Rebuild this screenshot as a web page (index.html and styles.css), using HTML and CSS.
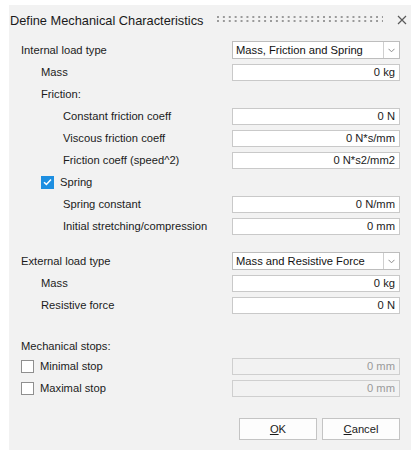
FILE: index.html
```html
<!DOCTYPE html>
<html>
<head>
<meta charset="utf-8">
<link rel="stylesheet" href="styles.css">
</head>
<body>
<div class="dialog">
  <div class="titlebar">
    <span class="title">Define Mechanical Characteristics</span>
    <span class="grip"></span>
    <svg class="close" width="10" height="10" viewBox="0 0 10 10"><path d="M1 1L9 9M9 1L1 9" stroke="#5a5a5a" stroke-width="1.2" fill="none"/></svg>
  </div>
  <div class="body">
    <div class="row"><span class="label l0">Internal load type</span>
      <div class="combo"><span class="combo-text">Mass, Friction and Spring</span><span class="combo-btn"><svg width="7" height="5" viewBox="0 0 7 5"><path d="M0.5 0.8L3.5 3.8L6.5 0.8" stroke="#8a8a8a" stroke-width="1" fill="none"/></svg></span></div>
    </div>
    <div class="row"><span class="label l1">Mass</span><div class="field">0 kg</div></div>
    <div class="row"><span class="label l1">Friction:</span></div>
    <div class="row"><span class="label l2">Constant friction coeff</span><div class="field">0 N</div></div>
    <div class="row"><span class="label l2">Viscous friction coeff</span><div class="field">0 N*s/mm</div></div>
    <div class="row"><span class="label l2">Friction coeff (speed^2)</span><div class="field">0 N*s2/mm2</div></div>
    <div class="row"><span class="label l1 check-label"><span class="check on"><svg width="9" height="8" viewBox="0 0 9 8"><path d="M1 4.2L3.4 6.4L8 1.4" stroke="#fff" stroke-width="1.5" fill="none"/></svg></span>Spring</span></div>
    <div class="row"><span class="label l2">Spring constant</span><div class="field">0 N/mm</div></div>
    <div class="row"><span class="label l2">Initial stretching/compression</span><div class="field">0 mm</div></div>

    <div class="row section"><span class="label l0">External load type</span>
      <div class="combo"><span class="combo-text">Mass and Resistive Force</span><span class="combo-btn"><svg width="7" height="5" viewBox="0 0 7 5"><path d="M0.5 0.8L3.5 3.8L6.5 0.8" stroke="#8a8a8a" stroke-width="1" fill="none"/></svg></span></div>
    </div>
    <div class="row"><span class="label l1">Mass</span><div class="field">0 kg</div></div>
    <div class="row"><span class="label l1">Resistive force</span><div class="field">0 N</div></div>

    <div class="row small stops"><span class="label l0">Mechanical stops:</span></div>
    <div class="row"><span class="label l0 check-label"><span class="check"></span>Minimal stop</span><div class="field disabled">0 mm</div></div>
    <div class="row"><span class="label l0 check-label"><span class="check"></span>Maximal stop</span><div class="field disabled">0 mm</div></div>

    <div class="buttons">
      <button class="btn"><u>O</u>K</button>
      <button class="btn"><u>C</u>ancel</button>
    </div>
  </div>
</div>
</body>
</html>
```
FILE: styles.css
```css
html, body {
  margin: 0;
  padding: 0;
  background: #ffffff;
}
body {
  font-family: "Liberation Sans", Arial, sans-serif;
  font-size: 11.2px;
  color: #1b1b1b;
}
.dialog {
  margin: 5px 7px 0 9px;
  width: 402px;
  height: 445px;
  background: #f2f2f2;
  box-sizing: border-box;
  padding: 0 11px 0 0;
}
.titlebar {
  height: 28px;
  display: flex;
  align-items: center;
  padding-left: 1px;
  padding-top: 2px;
  box-sizing: border-box;
}
.title {
  font-size: 12.8px;
  color: #1a1a1a;
}
.grip {
  flex: 1;
  height: 8px;
  margin: 0 14px 0 14px;
  background-image: radial-gradient(circle at 1px 1px, #9a9a9a 0.8px, transparent 1.1px);
  background-size: 5.9px 4px;
}
.close {
  margin-right: -7px;
}
.body {
  padding-top: 6px;
}
.row {
  height: 22px;
  display: flex;
  align-items: center;
}
.row.section {
  margin-top: 13px;
}
.row.stops {
  margin-top: 21px;
  height: 18px;
}
.label {
  flex: 1;
  white-space: nowrap;
  display: flex;
  align-items: center;
}
.l0 { padding-left: 12px; }
.l1 { padding-left: 32px; }
.l2 { padding-left: 54px; }
.field, .combo {
  width: 168px;
  height: 17px;
  box-sizing: border-box;
  border: 1px solid #c9c9c9;
  background: #ffffff;
}
.field {
  text-align: right;
  padding-right: 4px;
  line-height: 15px;
}
.field.disabled {
  background: #f2f2f2;
  border-color: #cfcfcf;
  color: #9a9a9a;
}
.combo {
  height: 18px;
  display: flex;
  border-color: #bdbdbd;
}
.combo-text {
  flex: 1;
  padding-left: 3px;
  line-height: 16px;
  color: #111;
}
.combo-btn {
  width: 15px;
  border-left: 1px solid #cfcfcf;
  display: flex;
  align-items: center;
  justify-content: center;
}
.check-label {
  gap: 6px;
}
.check {
  width: 13px;
  height: 13px;
  box-sizing: border-box;
  border: 1px solid #8f8f8f;
  background: #ffffff;
  display: inline-flex;
  align-items: center;
  justify-content: center;
}
.check.on {
  border: none;
  background: #1e8fe1;
}
.buttons {
  display: flex;
  justify-content: flex-end;
  gap: 5px;
  margin-top: 19px;
}
.btn {
  width: 78px;
  height: 22px;
  font-family: inherit;
  font-size: 11.2px;
  color: #1b1b1b;
  background: #fdfdfd;
  border: 1px solid #c4c4c4;
  border-radius: 0;
  padding: 0;
}
.btn u {
  text-decoration-thickness: 1px;
  text-underline-offset: 1px;
}
```
